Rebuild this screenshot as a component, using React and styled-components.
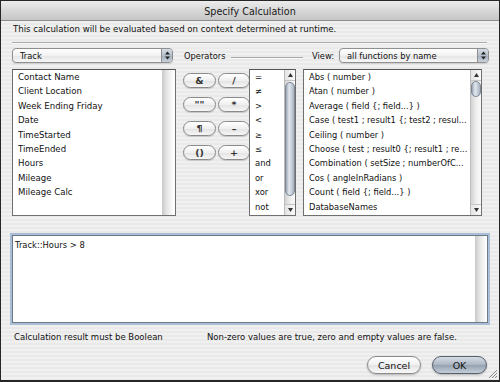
import React from "react";
import styled, { createGlobalStyle } from "styled-components";

const GlobalStyle = createGlobalStyle`
  html, body {
    margin: 0;
    padding: 0;
    background: #2a2a2a;
  }
  * {
    box-sizing: border-box;
  }
`;

const UI_FONT = `"DejaVu Sans", "Liberation Sans", sans-serif`;

const Window = styled.div`
  width: 500px;
  height: 382px;
  border: 1px solid #262626;
  border-bottom-width: 2px;
  background: repeating-linear-gradient(
    to bottom,
    #f0f0f0 0,
    #f0f0f0 2px,
    #e9e9e9 2px,
    #e9e9e9 4px
  );
  font-family: ${UI_FONT};
  color: #111;
  display: flex;
  flex-direction: column;
  position: relative;
  overflow: hidden;
`;

const TitleBar = styled.div`
  height: 20px;
  flex-shrink: 0;
  background: linear-gradient(to bottom, #ececec, #d4d4d4 60%, #c6c6c6);
  border-bottom: 1px solid #8d8d8d;
  display: flex;
  align-items: center;
  justify-content: center;
  font-size: 9.6px;
  color: #1a1a1a;
  padding-top: 1px;
`;

const Body = styled.div`
  flex: 1;
  display: flex;
  flex-direction: column;
  padding: 2px 10px 0 11px;
`;

const Intro = styled.div`
  font-size: 8.6px;
  line-height: 12px;
  padding-left: 1px;
  white-space: nowrap;
`;

const Rule = styled.div`
  height: 2px;
  margin: 7px 2px 4px 0;
  border-top: 1px solid #a9a9a9;
  border-bottom: 1px solid #fafafa;
`;

const TopRow = styled.div`
  display: flex;
  align-items: center;
  height: 15px;
`;

const Popup = styled.div`
  width: ${({ width }) => width || "auto"};
  flex: ${({ grow }) => (grow ? 1 : "none")};
  height: 15px;
  border: 1px solid #8f8f8f;
  border-radius: 4px;
  background: linear-gradient(to bottom, #ffffff, #f1f1f1 50%, #e4e4e4 51%, #f7f7f7);
  display: flex;
  align-items: center;
  font-size: 8.3px;
  overflow: hidden;
  box-shadow: 0 1px 1px rgba(0, 0, 0, 0.12);
`;

const PopupLabel = styled.span`
  flex: 1;
  padding-left: 7px;
  white-space: nowrap;
`;

const PopupCap = styled.span`
  width: 11px;
  height: 100%;
  border-left: 1px solid #8f8f8f;
  background: linear-gradient(to bottom, #d4dbe4, #b5bfcb 50%, #a3aebc 51%, #c8d0da);
  display: flex;
  align-items: center;
  justify-content: center;
`;

const OperatorsHead = styled.div`
  display: flex;
  align-items: center;
  margin-left: 11px;
  width: 119px;
  font-size: 8.3px;
`;

const HeadLine = styled.span`
  flex: 1;
  margin-left: 6px;
  margin-top: 5px;
  height: 2px;
  border-top: 1px solid #a9a9a9;
  border-bottom: 1px solid #fafafa;
`;

const ViewGroup = styled.div`
  flex: 1;
  display: flex;
  align-items: center;
  margin-left: 9px;
  font-size: 8.3px;
  gap: 5px;
`;

const Panels = styled.div`
  display: flex;
  margin-top: 6px;
  height: 147px;
`;

const ListBox = styled.div`
  width: ${({ width }) => width}px;
  margin-right: ${({ gapAfter }) => gapAfter || 0}px;
  height: 100%;
  border: 1px solid #6f6f6f;
  border-top-color: #555;
  background: #fff;
  display: flex;
  overflow: hidden;
`;

const Items = styled.div`
  flex: 1;
  min-width: 0;
  padding-left: ${({ indent }) => indent}px;
  font-size: ${({ size }) => size || 8.4}px;
  line-height: 14.4px;
`;

const Item = styled.div`
  white-space: nowrap;
  overflow: hidden;
`;

const EmptyTrack = styled.div`
  width: 11px;
  height: 100%;
  margin-right: ${({ inset }) => inset || 0}px;
  background: linear-gradient(to right, #c9c9c9, #e6e6e6 45%, #fdfdfd);
`;

const ScrollBar = styled.div`
  width: 11px;
  height: 100%;
  border-left: 1px solid #bcbcbc;
  display: flex;
  flex-direction: column;
  background: linear-gradient(to right, #d2d2d2, #eeeeee 50%, #fafafa);
`;

const Arrow = styled.div`
  height: 11px;
  flex-shrink: 0;
  display: flex;
  align-items: center;
  justify-content: center;
  background: linear-gradient(to right, #e4e4e4, #fafafa);
  border-bottom: ${({ up }) => (up ? "1px solid #c4c4c4" : "none")};
  border-top: ${({ up }) => (up ? "none" : "1px solid #c4c4c4")};
`;

const Track = styled.div`
  flex: 1;
  position: relative;
`;

const Thumb = styled.div`
  position: absolute;
  left: 0;
  right: 0;
  top: ${({ top }) => top}px;
  height: ${({ size }) => size}px;
  border: 1px solid #7d8794;
  border-radius: 5px;
  background: linear-gradient(to right, #9ba6b4, #e2e8ef 40%, #cdd5df 60%, #a9b3c0);
`;

const OpGrid = styled.div`
  width: 73px;
  display: grid;
  grid-template-columns: 33px 32px;
  grid-auto-rows: 15px;
  column-gap: 2px;
  row-gap: 9px;
  padding: 4px 0 0 7px;
  align-content: start;
`;

const OpButton = styled.div`
  border: 1px solid #8a8a8a;
  border-radius: 8px;
  background: linear-gradient(to bottom, #ffffff, #f0f0f0 50%, #e2e2e2 51%, #f6f6f6);
  box-shadow: 0 1px 1px rgba(0, 0, 0, 0.15);
  display: flex;
  align-items: center;
  justify-content: center;
  font-size: 9.5px;
  font-weight: bold;
  color: #333;
`;

const Formula = styled.div`
  margin-top: 19px;
  height: 88px;
  margin-right: 1px;
  border: 1px solid #6f7a88;
  box-shadow: 0 0 0 2px #a9bfd8;
  background: #fff;
  display: flex;
`;

const FormulaText = styled.div`
  flex: 1;
  padding: 3px 0 0 2px;
  font-size: 8.4px;
  line-height: 12px;
`;

const StatusRow = styled.div`
  display: flex;
  margin-top: 8px;
  line-height: 12px;
  font-size: 8.5px;
  padding-left: 2px;
  white-space: nowrap;
`;

const StatusLeft = styled.span`
  width: 193px;
`;

const ButtonRow = styled.div`
  display: flex;
  justify-content: flex-end;
  gap: 11px;
  margin-top: 13px;
  padding-right: 2px;
`;

const PushButton = styled.div`
  width: ${({ primary }) => (primary ? 55 : 54)}px;
  height: 18px;
  border-radius: 9px;
  border: 1px solid ${({ primary }) => (primary ? "#56606c" : "#8a8a8a")};
  background: ${({ primary }) =>
    primary
      ? "linear-gradient(to bottom, #d5dde6, #aab5c2 50%, #95a1b0 51%, #c4ced9)"
      : "linear-gradient(to bottom, #ffffff, #f1f1f1 50%, #e3e3e3 51%, #f8f8f8)"};
  box-shadow: 0 1px 2px rgba(0, 0, 0, 0.25);
  display: flex;
  align-items: center;
  justify-content: center;
  font-size: 9.5px;
  color: #111;
`;

const Grip = styled.svg`
  position: absolute;
  right: 1px;
  bottom: 1px;
`;

const UpDown = () => (
  <svg width="5" height="9" viewBox="0 0 5 9">
    <path d="M2.5 0.5 L5 3.5 L0 3.5 Z" fill="#222" />
    <path d="M0 5.5 L5 5.5 L2.5 8.5 Z" fill="#222" />
  </svg>
);

const Tri = ({ up }) => (
  <svg width="5" height="4" viewBox="0 0 5 4">
    <path d={up ? "M2.5 0 L5 4 L0 4 Z" : "M0 0 L5 0 L2.5 4 Z"} fill="#333" />
  </svg>
);

const Scroller = ({ thumbTop, thumbSize }) => (
  <ScrollBar>
    <Arrow up>
      <Tri up />
    </Arrow>
    <Track>
      <Thumb top={thumbTop} size={thumbSize} />
    </Track>
    <Arrow>
      <Tri />
    </Arrow>
  </ScrollBar>
);

const fields = [
  "Contact Name",
  "Client Location",
  "Week Ending Friday",
  "Date",
  "TimeStarted",
  "TimeEnded",
  "Hours",
  "Mileage",
  "Mileage Calc",
];

const opButtons = ["&", "/", "\"\"", "*", "¶", "–", "()", "+"];

const operators = ["=", "≠", ">", "<", "≥", "≤", "and", "or", "xor", "not"];

const functions = [
  "Abs ( number )",
  "Atan ( number )",
  "Average ( field {; field...} )",
  "Case ( test1 ; result1 {; test2 ; resul...",
  "Ceiling ( number )",
  "Choose ( test ; result0 {; result1 ; re...",
  "Combination ( setSize ; numberOfC...",
  "Cos ( angleInRadians )",
  "Count ( field {; field...} )",
  "DatabaseNames",
];

export default function App() {
  return (
    <>
      <GlobalStyle />
      <Window>
        <TitleBar>Specify Calculation</TitleBar>
        <Body>
          <Intro>
            This calculation will be evaluated based on context determined at runtime.
          </Intro>
          <Rule />
          <TopRow>
            <Popup width="161px">
              <PopupLabel>Track</PopupLabel>
              <PopupCap>
                <UpDown />
              </PopupCap>
            </Popup>
            <OperatorsHead>
              <span>Operators</span>
              <HeadLine />
            </OperatorsHead>
            <ViewGroup>
              <span>View:</span>
              <Popup grow>
                <PopupLabel>all functions by name</PopupLabel>
                <PopupCap>
                  <UpDown />
                </PopupCap>
              </Popup>
            </ViewGroup>
          </TopRow>
          <Panels>
            <ListBox width={164}>
              <Items indent={5} size={8.6}>
                {fields.map((f) => (
                  <Item key={f}>{f}</Item>
                ))}
              </Items>
              <EmptyTrack inset={2} />
            </ListBox>
            <OpGrid>
              {opButtons.map((b) => (
                <OpButton key={b}>{b}</OpButton>
              ))}
            </OpGrid>
            <ListBox width={47} gapAfter={7}>
              <Items indent={5}>
                {operators.map((o) => (
                  <Item key={o}>{o}</Item>
                ))}
              </Items>
              <Scroller thumbTop={1} thumbSize={114} />
            </ListBox>
            <ListBox width={179}>
              <Items indent={5} size={8.3}>
                {functions.map((f) => (
                  <Item key={f}>{f}</Item>
                ))}
              </Items>
              <Scroller thumbTop={0} thumbSize={16} />
            </ListBox>
          </Panels>
          <Formula>
            <FormulaText>Track::Hours &gt; 8</FormulaText>
            <EmptyTrack inset={1} />
          </Formula>
          <StatusRow>
            <StatusLeft>Calculation result must be Boolean</StatusLeft>
            <span>Non-zero values are true, zero and empty values are false.</span>
          </StatusRow>
          <ButtonRow>
            <PushButton>Cancel</PushButton>
            <PushButton primary>OK</PushButton>
          </ButtonRow>
        </Body>
        <Grip width="11" height="11" viewBox="0 0 11 11">
          <path d="M10 2 L2 10 M10 5 L5 10 M10 8 L8 10" stroke="#8a8a8a" strokeWidth="1" />
        </Grip>
      </Window>
    </>
  );
}
